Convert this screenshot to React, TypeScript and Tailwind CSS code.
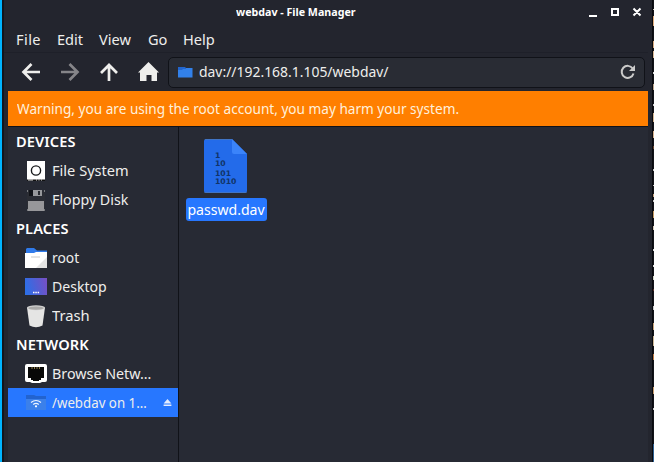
import type { ReactNode } from "react";

const specks: [number, number, string][] = [
  [9, 1, "#d8d0c0"], [16, 10, "#e0ad7d"], [41, 7, "#d6aa80"], [51, 7, "#d8b896"], [72, 2, "#ddd"],
  [84, 6, "#bca48a"], [104, 2, "#ccc"], [113, 9, "#d5b692"], [131, 7, "#d4b08c"], [146, 3, "#6b4630"],
  [169, 2, "#ccc"], [185, 1, "#ccc"], [194, 3, "#c6a27e"], [200, 2, "#ccc"], [211, 7, "#c49a62"],
  [226, 4, "#d8cbb8"], [249, 2, "#ddd"], [265, 2, "#ddd"], [276, 4, "#d4d8c8"], [289, 2, "#5a302a"],
  [306, 4, "#ccc"], [323, 7, "#c9a479"], [336, 10, "#cbb796"], [354, 6, "#bd7a42"], [387, 7, "#c99f70"],
  [408, 2, "#ccc"], [444, 18, "#2c5f91"],
];

function Row({ icon, label, fit = "", selected = false }: { icon: ReactNode; label: string; fit?: string; selected?: boolean }) {
  return (
    <div className={`flex h-[29px] items-center pl-4 ${selected ? "bg-[#2777ff]" : ""}`}>
      <svg viewBox="0 0 24 24" className="h-6 w-6 shrink-0">{icon}</svg>
      <span className={`ml-1 w-[112px] origin-left whitespace-nowrap ${fit}`}>{label}</span>
      {selected && (
        <svg viewBox="0 0 9 9" className="ml-auto mr-[6px] h-[9px] w-[9px] shrink-0 fill-[#e4edff]">
          <path d="M4.5 1 8.4 5.5H.6ZM.6 6.5h7.8v1.5H.6Z" />
        </svg>
      )}
    </div>
  );
}

function Heading({ children }: { children: string }) {
  return <div className="h-[29px] pl-2 text-[14.6px] font-semibold leading-[29px] tracking-[.1px] text-white">{children}</div>;
}

export default function App() {
  return (
    <div className="flex h-[462px] w-[654px] overflow-hidden bg-[#23252e] font-['Noto_Sans',sans-serif] text-[14.6px] text-[#eeeeec]">
      <div className="w-[2px] bg-[#00b4ff]" />
      <div className="w-[2px] bg-[#12161d]" />
      <div className="flex w-[648px] flex-col">
        <header className="flex h-6 items-center pl-[232px] text-white">
          <span className="w-[126px] origin-left scale-x-[.945] whitespace-nowrap text-[11.3px] font-bold">webdav - File Manager</span>
          <svg viewBox="0 0 54 10" className="ml-[226px] h-[10px] w-[54px] fill-none stroke-white stroke-2">
            <path d="M1 9h8M24 2h6v6h-6ZM45.5 1.5l7 7M52.5 1.5l-7 7" />
          </svg>
        </header>
        <nav className="flex h-8 items-center pl-3">
          <span className="w-[41px] tracking-[.4px]">File</span>
          <span className="w-[42px]">Edit</span>
          <span className="w-[49px]">View</span>
          <span className="w-[35px]">Go</span>
          <span>Help</span>
        </nav>
        <div className="-mt-1 mr-1 h-px bg-[#1e2029]" />
        <div className="ml-1 mr-1 flex h-[38px] items-center">
          <svg viewBox="0 0 160 38" className="h-[38px] w-[160px] fill-none stroke-[#eeeeec] stroke-[2.7]">
            <path d="M32 19H15.5M23.500 11l-8 8 8 8" />
            <path className="stroke-[#858589]" d="M53 19h16.500M61.500 11l8 8-8 8" />
            <path d="M101 28V12M93 20l8-8 8 8" />
            <path className="fill-[#eeeeec] stroke-none" d="m140.500 9 10.500 10.500h-2V28h-5.500v-6h-5v6H132v-8.500h-2Z" />
          </svg>
          <div className="flex h-[31px] w-[477px] items-center rounded-[5px] border border-[#101218] bg-[#292c34] pl-[9px]">
            <svg viewBox="0 0 15 12" className="h-3 w-[15px]">
              <path d="M0 1h6l2 1h6.500v9.500H0Z" fill="#3281ea" /><path d="M0 1h6l2 1v1H5L4 4H0Z" fill="#2265cd" />
            </svg>
            <span className="ml-[6px] origin-left scale-x-[.954] whitespace-nowrap">dav://192.168.1.105/webdav/</span>
            <svg viewBox="0 0 16 16" className="ml-auto mr-[8px] h-4 w-4 fill-none stroke-[#cbcbca] stroke-2">
              <path d="M13.500 9.500a6 6 0 1 1-.8-5" /><path className="fill-[#cbcbca] stroke-none" d="M15 1v6H9Z" />
            </svg>
          </div>
        </div>
        <div className="ml-1 mr-1 flex h-[35px] items-center bg-[#ff7f00] pl-[9px] text-[#fff0dc]">
          <span className="origin-left scale-x-[.933] whitespace-nowrap">Warning, you are using the root account, you may harm your system.</span>
        </div>
        <div className="ml-1 mr-1 flex h-[336px] border-t border-[#101218] bg-[#272a34]">
          <aside className="w-[171px] border-r border-[#101218]">
            <Heading>DEVICES</Heading>
            <Row label="File System" icon={<>
              <path d="M3 2h18v20H3Z" fill="#fff" /><circle cx="12" cy="11.500" r="4.600" fill="none" stroke="#17191c" strokeWidth="1.400" />
              <path d="M3 20.500h18V22H3Z" fill="#111" /><path d="M4 21h5M12 21h1M14.500 21h1M17 21h1" stroke="#ddd" />
            </>} />
            <Row label="Floppy Disk" fit="scale-x-[.975]" icon={<>
              <path d="M3 2h18v21H3Z" fill="#2b2d34" /><path d="M5 2h4v6H5Z" fill="#111318" />
              <path d="M9 2h9v6H9Z" fill="#97989b" /><path d="M14 3h2v4h-2Z" fill="#292b30" />
              <path d="M4 13h16v10H4Z" fill="#97979a" /><path d="M3 2h1v2H3ZM20 2h1v2h-1ZM3 21h1v2H3ZM20 21h1v2h-1Z" fill="#77797d" />
            </>} />
            <Heading>PLACES</Heading>
            <Row label="root" fit="scale-x-[.95]" icon={<>
              <path d="M2 3 3 2h7l3 2.500h10V16H2Z" fill="#2f7aea" /><path d="M1 7h9l2-1h11v16H1Z" fill="#fff" />
              <path d="m12 22 11-11v11Z" fill="#e4e4e4" /><path d="M7 11h9" stroke="#c8c8c8" />
            </>} />
            <Row label="Desktop" fit="scale-x-[.965]" icon={<>
              <defs><linearGradient id="desktop" x1="0" y1=".4" x2="1" y2=".2"><stop stopColor="#2e6ee6" /><stop offset="1" stopColor="#7650c4" /></linearGradient></defs>
              <path d="M1 3h22v17H1Z" fill="url(#desktop)" /><path d="M9 17.500h1.500M11.300 17.500h1.500M13.600 17.500h1.500" stroke="#fff" strokeWidth="1.500" />
            </>} />
            <Row label="Trash" fit="scale-x-[1.01]" icon={<>
              <path d="M3 3.500h18l-2.500 18Q12 25 5.500 21.500Z" fill="#e5e5e4" /><ellipse cx="12" cy="3.800" rx="9" ry="2.500" fill="#cfcfce" /><ellipse cx="12" cy="4.200" rx="7.500" ry="1.600" fill="#aaa9a8" />
            </>} />
            <Heading>NETWORK</Heading>
            <Row label="Browse Netw…" fit="scale-x-[.98]" icon={<>
              <path d="M3 2h18q2 0 2 2v14q0 2-2 2h-3l-2 1H8l-2-1H3q-2 0-2-2V4q0-2 2-2Z" fill="#fff" />
              <path d="M4 5h16v11h-3v2h-2v1H9v-1H7v-2H4Z" fill="#080807" /><path d="M8 5v2M10.500 5v2M13 5v2M15.500 5v2" stroke="#8c7a48" />
            </>} />
            <Row label="/webdav on 1…" fit="scale-x-[.91]" selected icon={<>
              <path d="M2 4h8l2 1h10v14H2Z" fill="#2263cf" /><path d="M2 8h20v11H2Z" fill="#3b80ea" />
              <path d="M7 11.500q5-4 10 0M9.200 13.500q2.800-2.300 5.600 0" fill="none" stroke="#edf4ff" strokeWidth="1.200" /><circle cx="12" cy="15.300" r="1.100" fill="#fff" />
            </>} />
          </aside>
          <main className="px-[7px] pt-[12px]">
            <div className="flex w-[81px] flex-col items-center">
              <svg viewBox="0 0 43 55" className="mr-[2px] h-[55px] w-[43px]">
                <path d="M2 0h26l15 15v37q0 2-2 2H2q-2 0-2-2V2Q0 0 2 0Z" fill="#236bea" />
                <path d="m28 0 15 15H30q-2 0-2-2Z" fill="#3b84fa" /><path d="M1 .5h27M.5 53.500h42" stroke="#4e78b5" strokeWidth=".7" />
                <g fill="#113468" fontFamily="DejaVu Sans" fontWeight="700" fontSize="7.700">
                  <text x="11" y="19">1</text><text x="11" y="27">10</text><text x="11" y="36.500">101</text><text x="11" y="44.500">1010</text>
                </g>
              </svg>
              <div className="mt-[4px] flex h-[23px] w-[81px] items-center justify-center rounded-[3px] bg-[#2777ff] text-white">
                <span className="scale-x-[.965]">passwd.dav</span>
              </div>
            </div>
          </main>
        </div>
      </div>
      <div className="w-px bg-[#090a0f]" />
      <svg viewBox="0 0 1 462" className="h-[462px] w-px bg-[#121319]">
        {specks.map(([y, h, color]) => <rect key={y} y={y} width="1" height={h} fill={color} />)}
      </svg>
    </div>
  );
}
